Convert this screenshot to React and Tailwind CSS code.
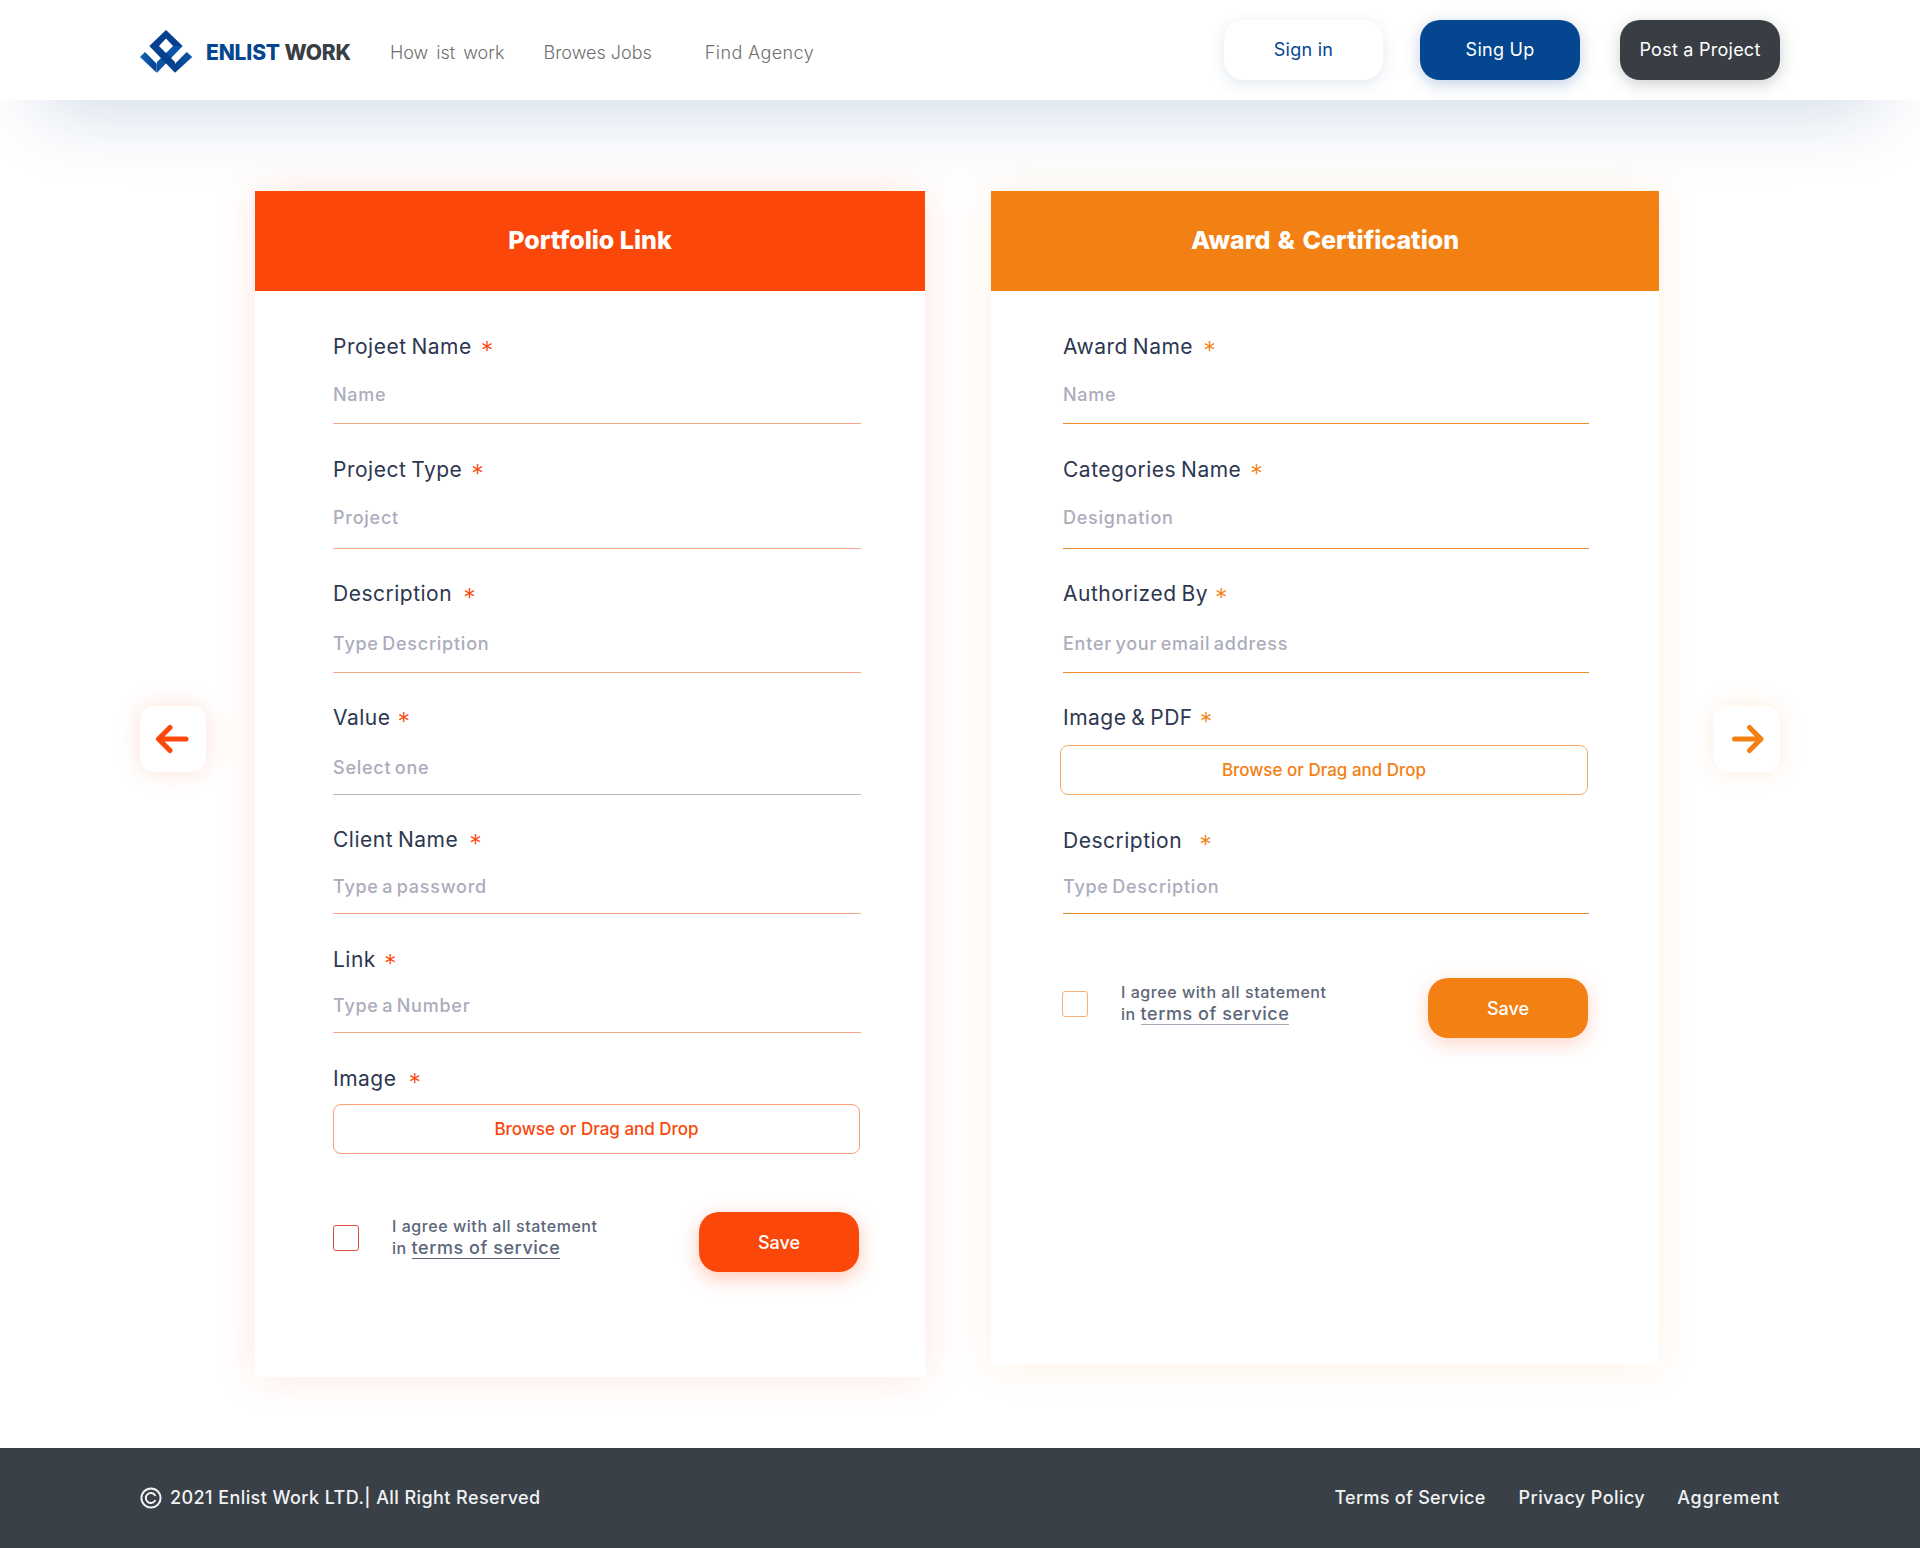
import React from "react";

const font = { fontFamily: '"Inter", "Liberation Sans", sans-serif' };

function Logo() {
  return (
    <svg width="54" height="44" viewBox="0 0 54 44" className="mt-[2px] shrink-0">
      <defs>
        <linearGradient id="lgL" x1="0" y1="0" x2="1" y2="0">
          <stop offset="0" stopColor="#1267b4" />
          <stop offset="1" stopColor="#04408f" />
        </linearGradient>
        <linearGradient id="lgR" x1="1" y1="0" x2="0" y2="0">
          <stop offset="0" stopColor="#0c58a8" />
          <stop offset="1" stopColor="#04408f" />
        </linearGradient>
      </defs>
      <polygon points="26,1 42.7,17 33,17 26,9.5 19,17 9.3,17" fill="#04408f" />
      <polygon points="0,28 5,23 16.7,34.7 16.7,43.7" fill="url(#lgL)" />
      <polygon points="52.3,28 46.7,23 35,34.7 35,43.7" fill="url(#lgR)" />
      <polygon points="42.7,17 33,17 17,33 17,43.7" fill="#0a55a5" />
      <polygon points="9.3,17 19,17 35,33 35,43.7" fill="#06408f" />
    </svg>
  );
}

function Field({ label, placeholder, accent, labelGap, className, phClass, children }) {
  return (
    <div className={className}>
      <div className="flex h-[30px] items-center text-[21px] leading-7 tracking-[0.5px] text-[#2d3750] [word-spacing:-1.5px]">
        <span>{label}</span>
        <span className={`${labelGap} ${accent} relative top-[4px] text-[25px] font-light leading-none`}>*</span>
      </div>
      {children ? children : null}
      {placeholder ? (
        <div className={`${phClass} text-[18px] font-medium leading-6 tracking-[0.75px] text-[#acacbc] [word-spacing:-2px]`}>{placeholder}</div>
      ) : null}
    </div>
  );
}

function Agree({ boxClass, lineClass }) {
  return (
    <div className="flex items-start">
      <div className={`mt-[13px] h-[26px] w-[26px] rounded-[3px] border ${boxClass}`} />
      <div className="ml-[33px] pt-[3px] text-[16px] font-medium leading-[22px] tracking-[0.55px] text-[#5c6679]">
        <div>I agree with all statement</div>
        <div>
          in <span className={`border-b text-[18px] ${lineClass}`}>terms of service</span>
        </div>
      </div>
    </div>
  );
}

function NavBtn({ children, className }) {
  return (
    <button className={`flex h-[60px] items-center justify-center rounded-[20px] pb-[2px] text-[18px] tracking-[0.25px] ${className}`}>
      {children}
    </button>
  );
}

const red = "text-[#fb470a]";
const org = "text-[#f38012]";

export default function App() {
  return (
    <div className="relative flex min-h-[1548px] w-full flex-col bg-white" style={font}>
      <div className="absolute inset-x-[40px] top-0 h-[100px] bg-[#cfd9e7] shadow-[0_10px_80px_#cfd9e7]" />
      <header className="relative z-10 flex h-[100px] items-center bg-white px-[140px]">
        <Logo />
        <div className="ml-[12px] pt-[6px] text-[21px] font-extrabold tracking-[-0.15px]">
          <span className="text-[#04468f]">ENLIST</span> <span className="text-[#383e44]">WORK</span>
        </div>
        <nav className="flex pt-[4px] text-[18px] font-light text-[#6f6f6f]">
          <span className="ml-[39px] [word-spacing:3px]">How ist work</span>
          <span className="ml-[39px]">Browes Jobs</span>
          <span className="ml-[53px] tracking-[0.4px]">Find Agency</span>
        </nav>
        <div className="ml-auto flex">
          <NavBtn className="w-[159px] bg-white text-[#04468f] shadow-[0_4px_16px_rgba(4,70,143,0.12)]">Sign in</NavBtn>
          <NavBtn className="ml-[37px] w-[160px] bg-[#04468f] text-white shadow-[0_4px_16px_rgba(4,70,143,0.25)]">Sing Up</NavBtn>
          <NavBtn className="ml-[40px] w-[160px] bg-[#383e44] text-white shadow-[0_4px_16px_rgba(56,62,68,0.25)]">Post a Project</NavBtn>
        </div>
      </header>

      <main className="relative flex-1">
        <div className="flex items-start px-[140px] pt-[91px]">
          <button className="mt-[515px] flex h-[66px] w-[66px] shrink-0 items-center justify-center rounded-[14px] bg-white shadow-[0_0_24px_rgba(251,71,10,0.16)]">
            <svg width="36" height="36" viewBox="0 0 36 36" fill="none" stroke="#fb470a" strokeWidth="5" strokeLinecap="round" strokeLinejoin="round">
              <path d="M31 18 H3.5 M15 6.5 L3.5 18 L15 29.5" />
            </svg>
          </button>

          <section className="ml-[49px] h-[1186px] w-[670px] shrink-0 bg-white shadow-[0_0_40px_rgba(251,71,10,0.13)]">
            <h2 className="flex h-[100px] items-center justify-center bg-[#fb470a] text-[25px] font-extrabold text-white">Portfolio Link</h2>
            <div className="pl-[78px] pr-[64px] pt-[41px]">
              <Field className="h-[92px] border-b border-[#f6a887]" phClass="pt-[21px]" label="Projeet Name" placeholder="Name" accent={red} labelGap="ml-[9px]" />
              <Field className="mt-[31px] h-[94px] border-b border-[#f6a887]" phClass="pt-[21px]" label="Project Type" placeholder="Project" accent={red} labelGap="ml-[9px]" />
              <Field className="mt-[30px] h-[94px] border-b border-[#f6a887]" phClass="pt-[23px]" label="Description" placeholder="Type Description" accent={red} labelGap="ml-[11px]" />
              <Field className="mt-[30px] h-[92px] border-b border-[#b9b9c6]" phClass="pt-[23px]" label="Value" placeholder="Select one" accent={red} labelGap="ml-[7px]" />
              <Field className="mt-[30px] h-[89px] border-b border-[#f6a887]" phClass="pt-[20px]" label="Client Name" placeholder="Type a password" accent={red} labelGap="ml-[11px]" />
              <Field className="mt-[31px] h-[88px] border-b border-[#f6a887]" phClass="pt-[19px]" label="Link" placeholder="Type a Number" accent={red} labelGap="ml-[8px]" />
              <Field className="mt-[31px]" label="Image" accent={red} labelGap="ml-[12px]">
                <div className="mr-[1px] mt-[10px] flex h-[50px] items-center justify-center rounded-[8px] border border-[#fb9e7a] pt-[1px] text-[17px] font-medium text-[#fb470a]">Browse or Drag and Drop</div>
              </Field>
              <div className="mt-[58px] flex items-start justify-between pr-[2px]">
                <Agree boxClass="border-[#e0503f]" lineClass="border-[#5c6679]" />
                <button className="flex h-[60px] w-[160px] items-center justify-center rounded-[20px] bg-[#fb470a] text-[18px] font-medium text-white shadow-[0_6px_20px_rgba(251,71,10,0.3)]">Save</button>
              </div>
            </div>
          </section>

          <section className="ml-[66px] h-[1174px] w-[668px] shrink-0 bg-white shadow-[0_0_40px_rgba(243,128,18,0.11)]">
            <h2 className="flex h-[100px] items-center justify-center bg-[#f38012] text-[25px] font-extrabold text-white [word-spacing:2px]">Award &amp; Certification</h2>
            <div className="pl-[72px] pr-[70px] pt-[41px]">
              <Field className="h-[92px] border-b border-[#f08a2c]" phClass="pt-[21px]" label="Award Name" placeholder="Name" accent={org} labelGap="ml-[10px]" />
              <Field className="mt-[31px] h-[94px] border-b border-[#f08a2c]" phClass="pt-[21px]" label="Categories Name" placeholder="Designation" accent={org} labelGap="ml-[9px]" />
              <Field className="mt-[30px] h-[94px] border-b border-[#f08a2c]" phClass="pt-[23px]" label="Authorized By" placeholder="Enter your email address" accent={org} labelGap="ml-[7px]" />
              <Field className="mt-[30px]" label="Image & PDF" accent={org} labelGap="ml-[7px]">
                <div className="-ml-[3px] mt-[12px] flex h-[50px] w-[528px] items-center justify-center rounded-[8px] border border-[#f7ad66] pt-[1px] text-[17px] font-medium text-[#f38012]">Browse or Drag and Drop</div>
              </Field>
              <Field className="mt-[31px] h-[88px] border-b border-[#f08a2c]" phClass="pt-[19px]" label="Description" placeholder="Type Description" accent={org} labelGap="ml-[17px]" />
              <div className="-ml-[1px] mt-[64px] flex items-start justify-between pr-[1px]">
                <Agree boxClass="border-[#f9b26f]" lineClass="border-[#a3acbb]" />
                <button className="flex h-[60px] w-[160px] items-center justify-center rounded-[20px] bg-[#f38012] text-[18px] font-medium text-white shadow-[0_6px_20px_rgba(251,71,10,0.22)]">Save</button>
              </div>
            </div>
          </section>

          <button className="ml-auto mt-[515px] flex h-[66px] w-[66px] shrink-0 items-center justify-center rounded-[14px] bg-white shadow-[0_0_24px_rgba(243,128,18,0.14)]">
            <svg width="36" height="36" viewBox="0 0 36 36" fill="none" stroke="#f38012" strokeWidth="5" strokeLinecap="round" strokeLinejoin="round">
              <path d="M5.5 18 H32 M20.5 6.5 L32 18 L20.5 29.5" />
            </svg>
          </button>
        </div>
      </main>

      <footer className="flex h-[100px] items-center bg-[#394047] px-[140px] pb-[1px] text-[18px] font-medium tracking-[0.42px] text-[#f1f2f3]">
        <svg width="22" height="22" viewBox="0 0 22 22" fill="none" stroke="#f1f2f3" strokeWidth="2" strokeLinecap="round">
          <circle cx="11" cy="11" r="9.6" />
          <path d="M15 8.2 A5 5 0 1 0 15 13.8" />
        </svg>
        <span className="ml-[8px]">2021 Enlist Work LTD.| All Right Reserved</span>
        <nav className="ml-auto flex">
          <span className="tracking-[0.3px]">Terms of Service</span>
          <span className="ml-[33px]">Privacy Policy</span>
          <span className="ml-[32px] tracking-[0.8px]">Aggrement</span>
        </nav>
      </footer>
    </div>
  );
}
